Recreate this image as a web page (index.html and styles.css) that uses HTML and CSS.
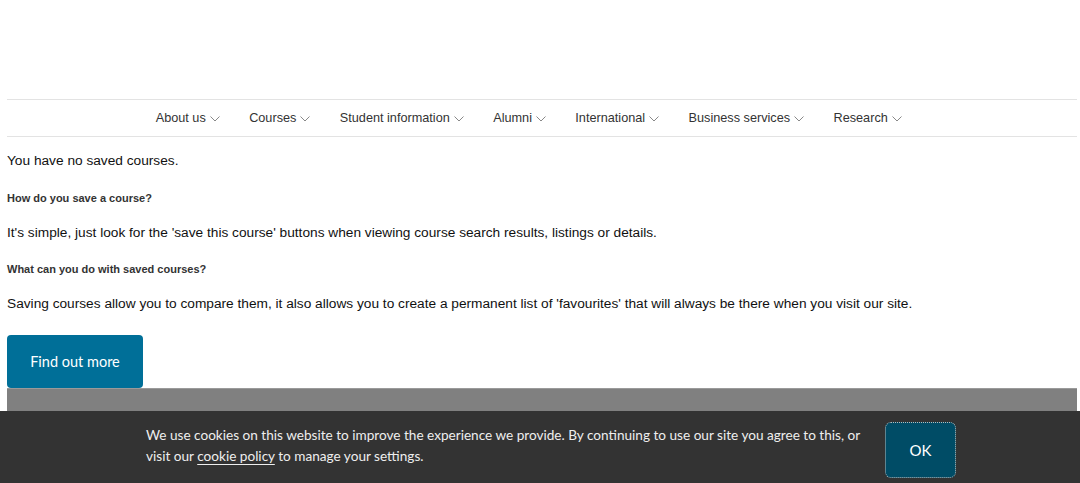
FILE: index.html
```html
<!DOCTYPE html>
<html lang="en">
<head>
<meta charset="utf-8">
<title>Saved courses</title>
<link rel="stylesheet" href="styles.css">
</head>
<body>
<div class="page">
  <header class="header"></header>
  <nav class="nav">
    <ul class="nav-list">
      <li class="nav-item">About us<svg class="chev" viewBox="0 0 10 6"><path d="M0.5 0.5 L5 5 L9.5 0.5"/></svg></li>
      <li class="nav-item">Courses<svg class="chev" viewBox="0 0 10 6"><path d="M0.5 0.5 L5 5 L9.5 0.5"/></svg></li>
      <li class="nav-item">Student information<svg class="chev" viewBox="0 0 10 6"><path d="M0.5 0.5 L5 5 L9.5 0.5"/></svg></li>
      <li class="nav-item">Alumni<svg class="chev" viewBox="0 0 10 6"><path d="M0.5 0.5 L5 5 L9.5 0.5"/></svg></li>
      <li class="nav-item">International<svg class="chev" viewBox="0 0 10 6"><path d="M0.5 0.5 L5 5 L9.5 0.5"/></svg></li>
      <li class="nav-item">Business services<svg class="chev" viewBox="0 0 10 6"><path d="M0.5 0.5 L5 5 L9.5 0.5"/></svg></li>
      <li class="nav-item">Research<svg class="chev" viewBox="0 0 10 6"><path d="M0.5 0.5 L5 5 L9.5 0.5"/></svg></li>
    </ul>
  </nav>
  <main class="content">
    <p class="lead">You have no saved courses.</p>
    <h2 class="subhead">How do you save a course?</h2>
    <p class="text">It's simple, just look for the 'save this course' buttons when viewing course search results, listings or details.</p>
    <h2 class="subhead subhead-2">What can you do with saved courses?</h2>
    <p class="text">Saving courses allow you to compare them, it also allows you to create a permanent list of 'favourites' that will always be there when you visit our site.</p>
    <a class="btn" href="#">Find out more</a>
  </main>
  <footer class="footer"></footer>
</div>
<div class="cookie">
  <div class="cookie-inner">
    <p class="cookie-text">We use cookies on this website to improve the experience we provide. By continuing to use our site you agree to this, or visit our <a href="#" class="cookie-link">cookie policy</a> to manage your settings.</p>
    <button class="cookie-ok">OK</button>
  </div>
</div>
</body>
</html>
```

FILE: styles.css
```css
* { box-sizing: border-box; }
html, body { margin: 0; padding: 0; background: #fff; }
body { font-family: "Liberation Sans", Arial, sans-serif; color: #111; overflow: hidden; }
.page { margin: 0 3px 0 7px; }
.header { height: 99px; }
.nav { border-top: 1px solid #e3e3e3; border-bottom: 1px solid #e3e3e3; height: 38px; }
.nav-list { list-style: none; margin: 0; padding: 0 0 0 134px; display: flex; justify-content: flex-start; height: 100%; align-items: center; }
.nav-item { font-size: 12.7px; color: #333; padding: 0 14.7px; display: flex; align-items: center; white-space: nowrap; }
.chev { width: 10px; height: 6px; margin-left: 4px; margin-top: 1px; fill: none; stroke: #888; stroke-width: 1; }
.content { padding-top: 16px; }
.lead { font-size: 13.7px; margin: 0; line-height: 16px; }
.subhead { font-size: 11px; font-weight: bold; color: #333; margin: 23px 0 0; line-height: 13px; }
.subhead-2 { margin-top: 22px; }
.text { font-size: 13.7px; margin: 20px 0 0; line-height: 16px; }
.btn { display: flex; align-items: center; justify-content: center; margin-top: 23px; width: 136px; height: 53px; background: #006f98; color: #fff; border-radius: 4px; font-family: Lato, sans-serif; font-size: 14.5px; text-decoration: none; }
.footer { height: 100px; background: #808080; border-top: 1px solid #9a9a9a; }
.cookie { position: fixed; left: 0; right: 0; bottom: 0; height: 72px; background: #333; }
.cookie-inner { display: flex; align-items: flex-start; padding-left: 146px; }
.cookie-text { margin: 14px 0 0; width: 740px; font-family: Lato, sans-serif; font-size: 13.6px; line-height: 21px; color: #eee; }
.cookie-link { color: #eee; text-decoration: underline; text-underline-offset: 3px; }
.cookie-ok { margin: 11px 0 0 -1px; width: 71px; height: 56px; background: #004c66; color: #fff; font-family: Lato, sans-serif; font-size: 15px; border: 1px dotted #bbb; border-radius: 6px; box-shadow: 0 0 0 1px #333; }
```
